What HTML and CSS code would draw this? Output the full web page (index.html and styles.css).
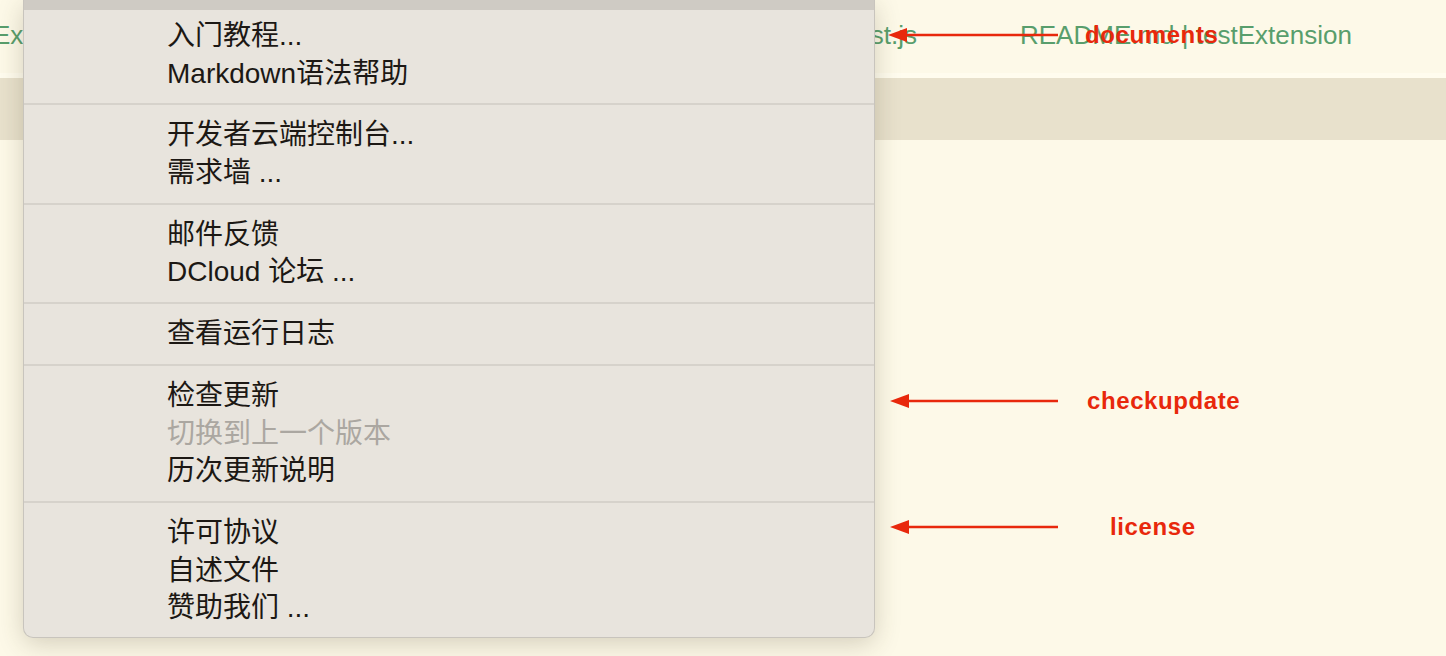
FILE: index.html
```html
<!DOCTYPE html>
<html lang="zh-CN">
<head>
<meta charset="utf-8">
<title>Help menu</title>
<link rel="stylesheet" href="styles.css">
</head>
<body>
<div class="page">
  <div class="tabs">
    <div class="tab-group">
      <span class="tab">Extension</span>
      <span class="tab">test.js</span>
    </div>
    <span class="tab tab-readme">README.md | testExtension</span>
  </div>
  <div class="tab-rule"></div>
  <div class="band"></div>

  <div class="menu">
    <div class="menu-top"></div>
    <div class="menu-section first">
      <div class="item">入门教程...</div>
      <div class="item">Markdown语法帮助</div>
    </div>
    <div class="sep"></div>
    <div class="menu-section">
      <div class="item">开发者云端控制台...</div>
      <div class="item">需求墙 ...</div>
    </div>
    <div class="sep"></div>
    <div class="menu-section">
      <div class="item">邮件反馈</div>
      <div class="item">DCloud 论坛 ...</div>
    </div>
    <div class="sep"></div>
    <div class="menu-section">
      <div class="item">查看运行日志</div>
    </div>
    <div class="sep"></div>
    <div class="menu-section">
      <div class="item">检查更新</div>
      <div class="item disabled">切换到上一个版本</div>
      <div class="item">历次更新说明</div>
    </div>
    <div class="sep"></div>
    <div class="menu-section last">
      <div class="item">许可协议</div>
      <div class="item">自述文件</div>
      <div class="item">赞助我们 ...</div>
    </div>
  </div>

  <svg class="arrow arrow-docs" width="175" height="16" viewBox="0 0 175 16">
    <line x1="12" y1="8" x2="170" y2="8" stroke="#e8280c" stroke-width="2.4"/>
    <polygon points="0,8 19,1 19,15" fill="#e8280c"/>
  </svg>
  <span class="note note-docs">documents</span>

  <svg class="arrow arrow-update" width="175" height="16" viewBox="0 0 175 16">
    <line x1="12" y1="8" x2="168" y2="8" stroke="#e8280c" stroke-width="2.4"/>
    <polygon points="0,8 19,1 19,15" fill="#e8280c"/>
  </svg>
  <span class="note note-update">checkupdate</span>

  <svg class="arrow arrow-license" width="175" height="16" viewBox="0 0 175 16">
    <line x1="12" y1="8" x2="168" y2="8" stroke="#e8280c" stroke-width="2.4"/>
    <polygon points="0,8 19,1 19,15" fill="#e8280c"/>
  </svg>
  <span class="note note-license">license</span>
</div>
</body>
</html>
```
FILE: styles.css
```css
html, body {
  margin: 0;
  padding: 0;
}
body {
  background: #fdf9e8;
  overflow: hidden;
}
.page {
  position: relative;
  width: 1446px;
  height: 656px;
  overflow: hidden;
  background: #fdf9e8;
  font-family: "Liberation Sans", "Noto Sans CJK SC", sans-serif;
}
.tabs {
  display: flex;
  align-items: flex-start;
  height: 73px;
  box-sizing: border-box;
  padding-top: 20px;
  margin-left: -7px;
}
.tab-group {
  display: flex;
  justify-content: space-between;
  width: 924px;
}
.tab {
  font-size: 26px;
  line-height: 30px;
  color: #589e6c;
  white-space: nowrap;
}
.tab-readme {
  margin-left: 103px;
}
.tab-rule {
  height: 5px;
  background: #fffcee;
}
.band {
  height: 62px;
  background: #e8e1cc;
}
.menu {
  position: absolute;
  left: 23px;
  top: 0;
  width: 852px;
  height: 638px;
  box-sizing: border-box;
  background: #e8e4dd;
  border: 1px solid #c8c4bd;
  border-top: none;
  border-radius: 0 0 10px 10px;
  box-shadow: 0 6px 26px rgba(70, 60, 30, 0.22);
  color: #1c1814;
  font-size: 28px;
  overflow: hidden;
}
.menu-top {
  height: 10px;
  background: #cfcbc4;
}
.menu-section.first {
  padding-top: 7px;
}
.item {
  height: 37.7px;
  line-height: 37.7px;
  padding-left: 143px;
  white-space: nowrap;
}
.item.disabled {
  color: #aba7a1;
}
.sep {
  height: 2px;
  margin: 11px 0;
  background: #d6d2cb;
}
.arrow {
  position: absolute;
}
.arrow-docs {
  left: 888px;
  top: 27px;
}
.arrow-update {
  left: 890px;
  top: 393px;
}
.arrow-license {
  left: 890px;
  top: 519px;
}
.note {
  position: absolute;
  font-family: "Liberation Sans", sans-serif;
  font-weight: bold;
  font-size: 24px;
  line-height: 24px;
  letter-spacing: 0.6px;
  color: #e8280c;
  white-space: nowrap;
}
.note-docs {
  left: 1085px;
  top: 23px;
}
.note-update {
  left: 1087px;
  top: 389px;
}
.note-license {
  left: 1110px;
  top: 515px;
}
```
